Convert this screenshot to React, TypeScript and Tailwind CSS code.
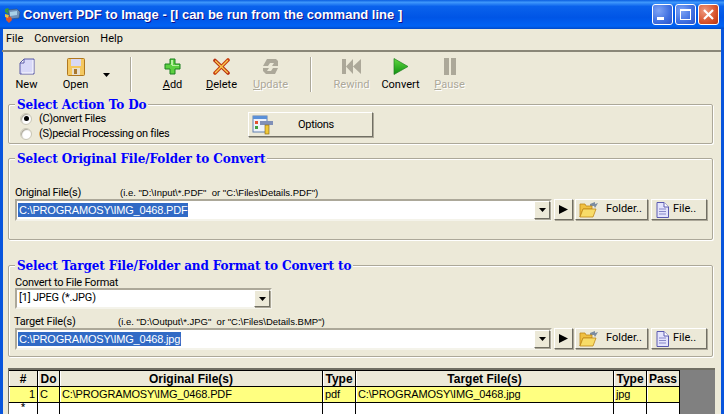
const ui = { fontFamily: 'Roboto, "Liberation Sans", Arial, sans-serif' };
const lib = { fontFamily: '"Liberation Sans", Arial, sans-serif' };

function AppIcon() {
  return (
    <svg width="18" height="18" viewBox="0 0 18 18" className="shrink-0">
      <path d="M2 3l3-1 2 3-2 3-3-2z" fill="#3c9a3c" />
      <path d="M5 4l9-1 3 3-1 6-9 1z" fill="#6f90b8" stroke="#2f4f70" strokeWidth="0.6" />
      <path d="M7 6l7-1v4l-7 1z" fill="#a8d0e8" />
      <path d="M3 10l5 1 1 3-3 3-3-3z" fill="#e0562a" />
      <path d="M2 8l4 1-1 3-3-1z" fill="#e8c040" />
    </svg>
  );
}

function WinBtn({ kind }: { kind: "min" | "max" | "close" }) {
  const bg =
    kind === "close"
      ? "bg-[radial-gradient(circle_at_30%_30%,#ef9a80,#d8532c_60%,#b8340f)]"
      : "bg-[radial-gradient(circle_at_30%_30%,#7fa4f5,#3f6fe0_60%,#2a52c8)]";
  return (
    <div className={`w-[21px] h-[21px] rounded-[3px] border border-white flex items-center justify-center ${bg}`}>
      <svg width="15" height="15" viewBox="0 0 15 15">
        {kind === "min" && <rect x="2" y="10" width="7" height="3" fill="#fff" />}
        {kind === "max" && (
          <g fill="none" stroke="#fff">
            <rect x="2.5" y="2.5" width="10" height="10" />
            <rect x="2" y="2" width="11" height="2" fill="#fff" stroke="none" />
          </g>
        )}
        {kind === "close" && <path d="M3 3l9 9M12 3l-9 9" stroke="#fff" strokeWidth="2.2" />}
      </svg>
    </div>
  );
}

function ToolBtn({ label, u, icon, disabled, w = "w-[49px]" }: { label: string; u?: boolean; icon: React.ReactNode; disabled?: boolean; w?: string }) {
  return (
    <div className={`${w} flex flex-col items-center`}>
      <div className="h-[19px] flex items-center justify-center">{icon}</div>
      <div
        className={`mt-[2px] text-[11px] leading-[14px] ${disabled ? "text-[#aca899] [text-shadow:1px_1px_0_#fff]" : "text-black"}`}
      >
        {u ? (
          <>
            <span className="underline">{label[0]}</span>
            {label.slice(1)}
          </>
        ) : (
          label
        )}
      </div>
    </div>
  );
}

const NewIcon = (
  <svg width="16" height="17" viewBox="0 0 16 17">
    <path d="M5 1h10v15H1V5z" fill="#d8d8f8" stroke="#5a5aa8" />
    <path d="M5 1v4H1z" fill="#fff" stroke="#5a5aa8" />
    <path d="M14 2v13H3" fill="none" stroke="#fff" />
  </svg>
);
const OpenIcon = (
  <svg width="18" height="18" viewBox="0 0 18 18">
    <rect x="0.5" y="0.5" width="17" height="17" rx="1" fill="#f4c860" stroke="#b07820" />
    <rect x="4" y="1" width="10" height="7" fill="#d8d8f4" />
    <rect x="5" y="10" width="8" height="7" fill="#e8e0d0" />
    <rect x="7" y="11" width="3" height="5" fill="#a87830" />
  </svg>
);
const AddIcon = (
  <svg width="17" height="17" viewBox="0 0 17 17">
    <path d="M6 1h5v5h5v5h-5v5H6v-5H1V6h5z" fill="#5cd040" stroke="#1c8020" />
    <path d="M7 2h2v5h6v1H8v-1H7z" fill="#b8f0a0" />
  </svg>
);
const DelIcon = (
  <svg width="17" height="17" viewBox="0 0 17 17">
    <path d="M2 2.5l13 12.5" stroke="#b83010" strokeWidth="3.6" strokeLinecap="round" />
    <path d="M15 2L2 15" stroke="#c84010" strokeWidth="3.6" strokeLinecap="round" />
    <path d="M2.500 3l12 11.500" stroke="#f8c850" strokeWidth="1.4" strokeLinecap="round" />
    <path d="M14.500 2.500L2.500 14.500" stroke="#f8c850" strokeWidth="1.4" strokeLinecap="round" />
  </svg>
);
const UpdIcon = (
  <svg width="17" height="17" viewBox="0 0 17 17" fill="#aca899">
    <path d="M5 1h9l2 2v5h-6l2-3H8L6 8H1z" />
    <path d="M1 10h6l-2 3h4l2-3h5l-3 6H4l-3-3z" />
  </svg>
);
const RewIcon = (
  <svg width="20" height="15" viewBox="0 0 20 15" fill="#aca899">
    <rect x="0" y="0" width="4" height="15" />
    <path d="M11 0v15L4 7.500zM19 0v15l-8-7.500z" />
  </svg>
);
const PlayIcon = (
  <svg width="16" height="17" viewBox="0 0 16 17">
    <defs>
      <linearGradient id="gp" x1="0" y1="0" x2="0" y2="1">
        <stop offset="0" stopColor="#60d840" />
        <stop offset="1" stopColor="#109010" />
      </linearGradient>
    </defs>
    <path d="M1 0.5v16l14-8z" fill="url(#gp)" stroke="#208020" strokeWidth="0.7" />
  </svg>
);
const PauseIcon = (
  <svg width="12" height="17" viewBox="0 0 12 17" fill="#aca899">
    <rect x="0" y="0" width="5" height="17" />
    <rect x="7" y="0" width="5" height="17" />
  </svg>
);

function Group({ title, className, children }: { title: string; className: string; children: React.ReactNode }) {
  return (
    <div
      className={`relative ml-[5px] mr-[8px] border border-[#aca899] rounded-[2px] shadow-[inset_1px_1px_0_#fff,1px_1px_0_#fff] ${className}`}
    >
      <div
        className="absolute left-[6px] top-[-8px] bg-[#ece9d8] px-[2px] text-[12px] leading-[16px] font-bold text-[#0000ff] tracking-[-0.1px] whitespace-nowrap"
        style={{ fontFamily: '"DejaVu Serif", serif' }}
      >
        {title}
      </div>
      {children}
    </div>
  );
}

const raised = "bg-[#ece9d8] border border-t-white border-l-white border-r-[#716f64] border-b-[#716f64] shadow-[1px_1px_0_#aca899]";
const sunken = "bg-white border-2 border-t-[#aca899] border-l-[#aca899] border-r-[#f4f3ea] border-b-[#f4f3ea]";

function DropBtn() {
  return (
    <div className={`${raised} w-[16px] self-stretch flex items-center justify-center ml-auto`}>
      <svg width="7" height="4" viewBox="0 0 7 4">
        <path d="M0 0h7L3.500 4z" fill="#000" />
      </svg>
    </div>
  );
}

const FolderIcon = (
  <svg width="20" height="17" viewBox="0 0 20 17">
    <path d="M11 3l5-2v2l3-1-3 5-1-2h-4z" fill="#7c8ca0" />
    <path d="M1 3h5l1 2h6v3H4L1 16z" fill="#f0c040" stroke="#c08818" strokeWidth="0.8" />
    <path d="M4 8h13l-3 8H1z" fill="#f8dc68" stroke="#c08818" strokeWidth="0.8" />
  </svg>
);
const FileIcon = (
  <svg width="13" height="16" viewBox="0 0 13 16">
    <path d="M1 .5h7l4.500 4.500v10.500H1z" fill="#e4e4fc" stroke="#5a5ab0" />
    <path d="M8 .5V5h4.500" fill="#fff" stroke="#5a5ab0" />
    <path d="M3 7h7M3 9.500h7M3 12h7" stroke="#8888c8" />
  </svg>
);

function PathRow({ value }: { value: string }) {
  return (
    <div className="flex items-start ml-[6px] h-[24px]">
      <div className={`${sunken} w-[537px] h-[22px] flex items-center pl-[1px]`}>
        <span className="bg-[#316ac5] text-white text-[11px] leading-[14px] px-[1px] tracking-[-0.2px]" style={lib}>
          {value}
        </span>
        <DropBtn />
      </div>
      <div className={`${raised} ml-[2px] w-[19px] h-[21px] flex items-center justify-center`}>
        <svg width="9" height="9" viewBox="0 0 9 9">
          <path d="M0 0l9 4.500-9 4.500z" fill="#000" />
        </svg>
      </div>
      <div className={`${raised} ml-[2px] w-[73px] h-[21px] flex items-center pl-[3px] gap-[7px] text-[11px]`}>
        {FolderIcon}
        <span>Folder..</span>
      </div>
      <div className={`${raised} ml-[3px] w-[56px] h-[21px] flex items-center pl-[4px] gap-[4px] text-[11px]`}>
        {FileIcon}
        <span>File..</span>
      </div>
    </div>
  );
}

function Radio({ on }: { on?: boolean }) {
  return (
    <div className="w-[12px] h-[12px] rounded-full bg-white border border-[#c8c5b4] flex items-center justify-center shadow-[inset_1px_1px_1px_#aca899]">
      {on && <div className="w-[5px] h-[5px] rounded-full bg-black" />}
    </div>
  );
}

const cols = "grid grid-cols-[29px_22px_263px_33px_258px_33px_33px]";
const cell =
  "border-r border-b border-black h-[16px] flex overflow-hidden whitespace-nowrap shadow-[inset_1px_0_0_#fff]";

function HeadCell({ children }: { children: React.ReactNode }) {
  return (
    <div className={`${cell} items-center justify-center font-bold bg-[#ece9d8] text-[12px]`} style={lib}>
      {children}
    </div>
  );
}
function DataCell({ children, right }: { children?: React.ReactNode; right?: boolean }) {
  return (
    <div className={`${cell} items-center bg-[#ffff80] text-[11px] tracking-[-0.15px] px-[2px] ${right ? "justify-end" : ""}`} style={lib}>
      {children}
    </div>
  );
}
function EmptyCell({ children }: { children?: React.ReactNode }) {
  return <div className={`${cell} bg-white justify-center text-[9px] leading-[9px] font-bold`}>{children}</div>;
}

export default function App() {
  return (
    <div className="w-[724px] h-[414px] overflow-hidden flex flex-col bg-[#ece9d8] text-black" style={ui}>
      <div className="h-[29px] shrink-0 flex items-center pl-[3px] pr-[5px] bg-[linear-gradient(180deg,#0a5ee0_0%,#3f98fb_8%,#0a62ec_22%,#0055e6_60%,#0062f4_90%,#0049c8_100%)]">
        <AppIcon />
        <div
          className="ml-[2px] text-white font-bold text-[13px] [text-shadow:1px_1px_0_#0f1089] whitespace-nowrap"
          style={lib}
        >
          Convert PDF to Image - [I can be run from the command line ]
        </div>
        <div className="ml-auto flex gap-[2px]">
          <WinBtn kind="min" />
          <WinBtn kind="max" />
          <WinBtn kind="close" />
        </div>
      </div>

      <div className="flex-1 min-h-0 flex border-x-[3px] border-[#0855dd]">
        <div className="flex-1 min-w-0 flex flex-col">
          <div className="h-[21px] shrink-0 flex items-center pl-[3px] gap-[11px] text-[11px]">
            <span>File</span>
            <span>Conversion</span>
            <span>Help</span>
          </div>

          <div className="h-[45px] shrink-0 border-t-2 border-[#8a8778] flex items-start pt-[5px] ml-[-1px]">
            <ToolBtn label="New" icon={NewIcon} />
            <ToolBtn label="Open" icon={OpenIcon} />
            <div className="w-[9px] h-[19px] mt-[16px] ml-[3px] mr-[18px]">
              <svg width="7" height="4" viewBox="0 0 7 4">
                <path d="M0 0h7L3.500 4z" fill="#000" />
              </svg>
            </div>
            <div className="w-[2px] h-[35px] bg-[#aca899] border-r border-white mr-[16px]" />
            <ToolBtn label="Add" u icon={AddIcon} />
            <ToolBtn label="Delete" u icon={DelIcon} />
            <ToolBtn label="Update" u icon={UpdIcon} disabled />
            <div className="w-[2px] h-[35px] bg-[#aca899] border-r border-white mx-[15px]" />
            <ToolBtn label="Rewind" icon={RewIcon} disabled />
            <ToolBtn label="Convert" icon={PlayIcon} />
            <ToolBtn label="Pause" u icon={PauseIcon} disabled />
          </div>

          <Group title="Select Action To Do" className="h-[40px] mt-[9px] shrink-0">
            <div className="flex items-start pl-[11px] pt-[6px]">
              <div className="flex flex-col text-[11px] leading-[15px] w-[228px] tracking-[-0.3px]">
                <div className="flex items-center gap-[7px]">
                  <Radio on />
                  <span>(C)onvert Files</span>
                </div>
                <div className="flex items-center gap-[7px]">
                  <Radio />
                  <span>(S)pecial Processing on files</span>
                </div>
              </div>
              <div className={`${raised} w-[125px] h-[25px] mt-[1px] flex items-center pl-[3px] text-[11px] pt-[1px] tracking-[-0.3px]`}>
                <svg width="22" height="20" viewBox="0 0 22 20">
                  <rect x="1" y="1" width="14" height="16" fill="#eef2fa" stroke="#6080b0" />
                  <rect x="1" y="1" width="14" height="3" fill="#5a90d8" />
                  <rect x="3" y="6" width="3" height="3" fill="#e05030" />
                  <rect x="3" y="11" width="3" height="3" fill="#40a040" />
                  <path d="M8 6h13v4H8z" fill="#8090b8" />
                  <rect x="13" y="10" width="4" height="9" fill="#f0c838" stroke="#806010" strokeWidth="0.6" />
                </svg>
                <span className="ml-[24px]">Options</span>
              </div>
            </div>
          </Group>

          <Group title="Select Original File/Folder to Convert" className="h-[82px] mt-[14px] shrink-0">
            <div className="flex items-baseline mt-[26px] ml-[6px] h-[14px] leading-[15px]">
              <span className="text-[11px] w-[105px] tracking-[-0.3px]">Original File(s)</span>
              <span className="text-[9.5px] whitespace-pre" style={lib}>(i.e. "D:\Input\*.PDF"  or "C:\Files\Details.PDF")</span>
            </div>
            <PathRow value="C:\PROGRAMOSY\IMG_0468.PDF" />
          </Group>

          <Group title="Select Target File/Folder and Format to Convert to" className="h-[92px] mt-[25px] shrink-0">
            <div className="text-[11px] leading-[13px] mt-[10px] ml-[6px] h-[12px] tracking-[-0.25px]">Convert to File Format</div>
            <div className={`${sunken} ml-[6px] w-[257px] h-[21px] flex items-center text-[11px] pl-[2px] tracking-[-0.2px]`}>
              <span>[1] JPEG (*.JPG)</span>
              <DropBtn />
            </div>
            <div className="flex items-baseline mt-[5px] ml-[5px] h-[14px] leading-[15px]">
              <span className="text-[11px] w-[104px] tracking-[-0.2px]">Target File(s)</span>
              <span className="text-[9.5px] whitespace-pre" style={lib}>(i.e. "D:\Output\*.JPG"  or "C:\Files\Details.BMP")</span>
            </div>
            <PathRow value="C:\PROGRAMOSY\IMG_0468.jpg" />
          </Group>

          <div className="mt-[11px] ml-[5px] mr-[6px] flex-1 min-h-0 bg-[#808080] border-t-2 border-l border-[#716f64] overflow-hidden">
            <div className={`${cols} w-[671px] border-t border-black`}>
              <HeadCell>#</HeadCell>
              <HeadCell>Do</HeadCell>
              <HeadCell>Original File(s)</HeadCell>
              <HeadCell>Type</HeadCell>
              <HeadCell>Target File(s)</HeadCell>
              <HeadCell>Type</HeadCell>
              <HeadCell>Pass</HeadCell>
              <DataCell right>1</DataCell>
              <DataCell>C</DataCell>
              <DataCell>C:\PROGRAMOSY\IMG_0468.PDF</DataCell>
              <DataCell>pdf</DataCell>
              <DataCell>C:\PROGRAMOSY\IMG_0468.jpg</DataCell>
              <DataCell>jpg</DataCell>
              <DataCell />
              <EmptyCell>*</EmptyCell>
              <EmptyCell />
              <EmptyCell />
              <EmptyCell />
              <EmptyCell />
              <EmptyCell />
              <EmptyCell />
            </div>
          </div>
        </div>
      </div>
    </div>
  );
}
